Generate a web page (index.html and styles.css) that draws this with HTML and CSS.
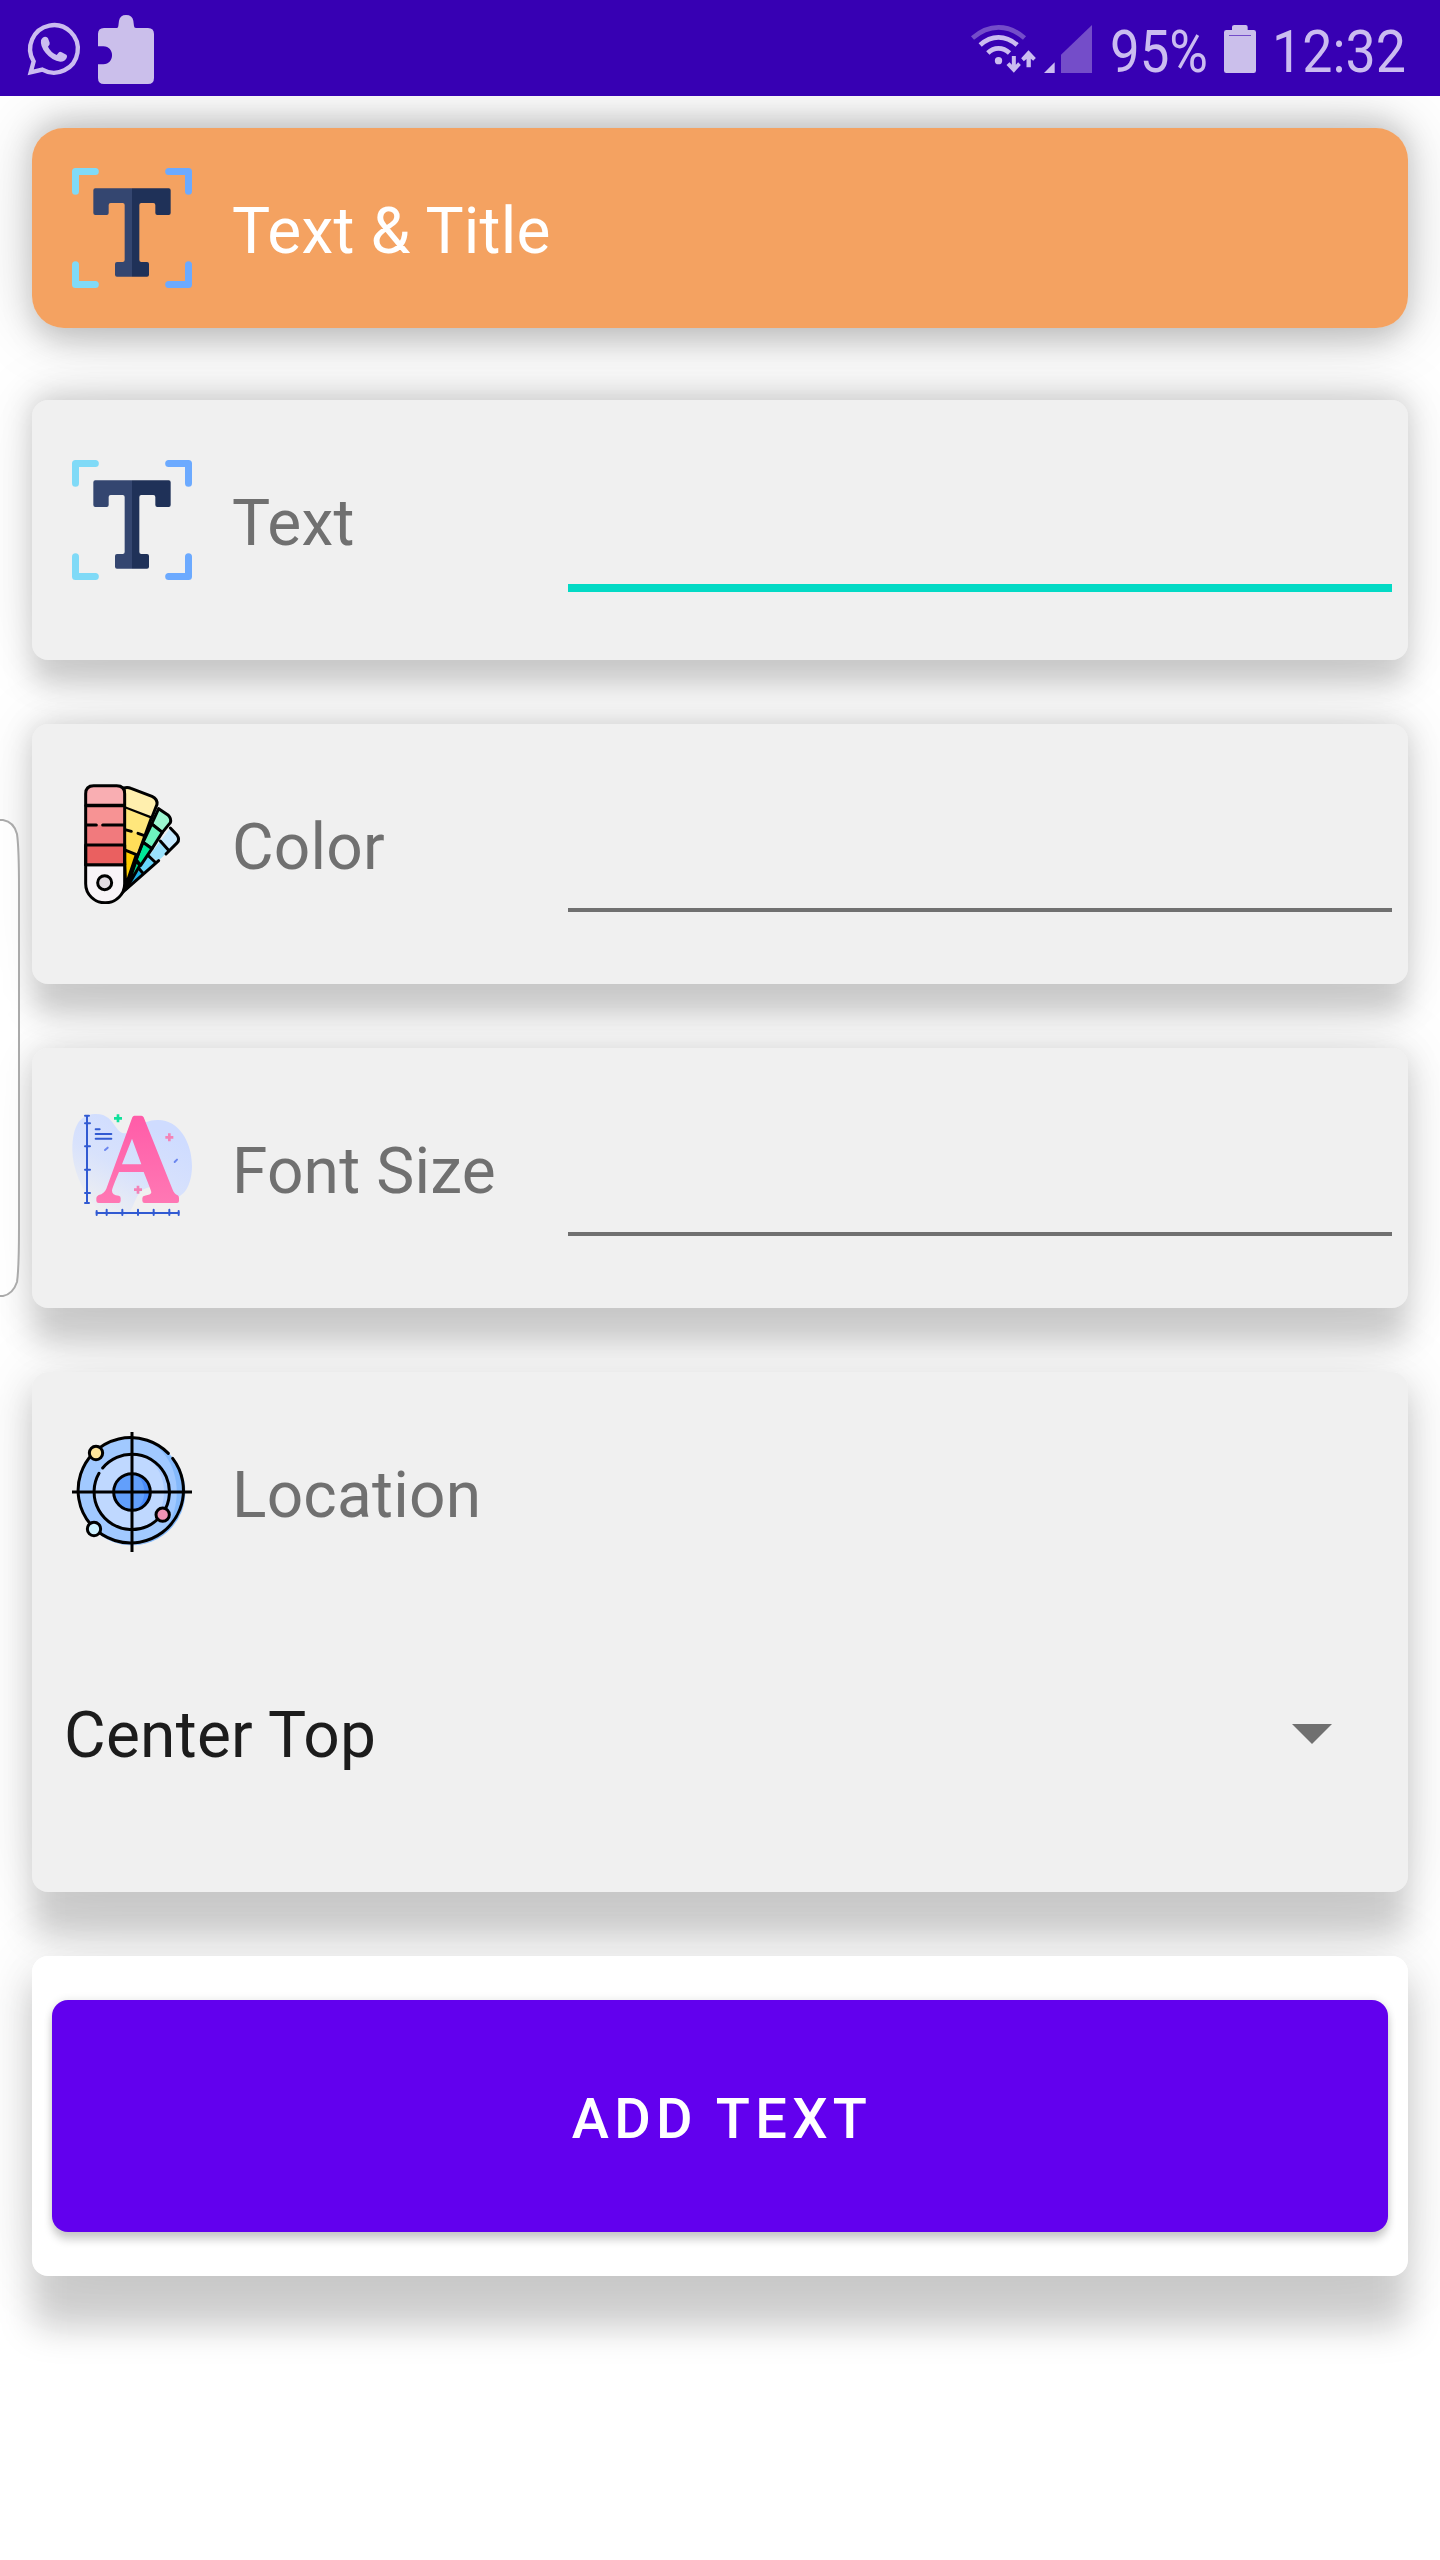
FILE: index.html
```html
<!DOCTYPE html>
<html lang="en">
<head>
<meta charset="utf-8">
<title>Text &amp; Title</title>
<link rel="stylesheet" href="styles.css">
</head>
<body>
<svg class="defs" width="0" height="0" aria-hidden="true">
  <symbol id="icon-text" viewBox="66 60 360 360">
    <g fill="none" stroke-width="21" stroke-linecap="round" stroke-linejoin="round">
      <path stroke="#80daf7" d="M76.500 130V70.500H136M76.500 350V409.500H136"/>
      <path stroke="#6caaff" d="M356 70.500H415.500V130M356 409.500H415.500V350"/>
    </g>
    <path fill="#344670" d="M136 121H246V386H201Q195 386 195 380V348Q195 342 201 342H218Q224 342 224 336V171Q224 165 218 165H182Q176 165 176 171V195Q176 201 170 201H136Q130 201 130 195V127Q130 121 136 121Z"/>
    <path fill="#1f3158" d="M246 121H356Q362 121 362 127V195Q362 201 356 201H322Q316 201 316 195V171Q316 165 310 165H274Q268 165 268 171V336Q268 342 274 342H291Q297 342 297 348V380Q297 386 291 386H246Z"/>
  </symbol>
</svg>

<header class="status">
  <svg class="status-whatsapp" viewBox="84 69 156 156">
    <path fill="none" stroke="#cbbcf0" stroke-width="13" d="M92 217L101 184A71.500 71.500 0 1 1 127 209Z"/>
    <path fill="#cbbcf0" d="M123 121Q127 110 136 110Q142 110 144 115L149 128Q151 133 144 140Q152 157 170 165L177 157Q180 154 185 157L199 164Q203 167 200 174Q195 185 181 185Q156 182 137 159Q120 139 123 121Z"/>
  </svg>
  <svg class="status-puzzle" viewBox="294 45 168 207">
    <path fill="#cbbfeb" d="M312 84H350Q355 84 355 78L357 62Q360 45 378 45Q397 45 400 62L402 78Q402 84 408 84H444Q462 84 462 102V234Q462 252 444 252H312Q294 252 294 234V193H310C345 193 345 139 310 139H294V102Q294 84 312 84Z"/>
  </svg>
  <span class="status-gap"></span>
  <svg class="status-wifi" viewBox="64 75 194 144">
    <g fill="none" stroke="#cbbcf0" stroke-width="14">
      <path stroke="#744dc9" d="M68 114Q105 82 146 82T224 114"/>
      <path d="M91 135Q116 112 146 112T202 135M114 159Q128 145 146 145T179 159"/>
    </g>
    <circle cx="146" cy="182" r="11" fill="#cbbcf0"/>
    <path fill="#cbbcf0" d="M186 168H198V194L205 187L213 195L192 218L170 195L179 187L186 194ZM230 202V177L222 184L214 175L236 151L258 174L250 182L243 176V202Z"/>
  </svg>
  <svg class="status-signal" viewBox="282 75 144 144">
    <path fill="#cbbcf0" d="M282 219L314 187V219Z"/>
    <path fill="#744dc9" d="M333 219V164L426 75V219Z"/>
  </svg>
  <svg class="status-percent" viewBox="0 0 98 96"><text x="0" y="72" textLength="98" lengthAdjust="spacingAndGlyphs">95%</text></svg>
  <svg class="status-battery" viewBox="822 75 96 144">
    <path fill="#cbbfeb" d="M853 75H887Q893 75 893 81V90H911Q918 90 918 97V212Q918 219 911 219H829Q822 219 822 212V97Q822 90 829 90H846V81Q846 75 853 75Z"/>
    <path fill="#744dc9" d="M837 105H903V108H837Z"/>
  </svg>
  <svg class="status-clock" viewBox="0 0 134 96"><text x="0" y="72" textLength="134" lengthAdjust="spacingAndGlyphs">12:32</text></svg>
</header>

<main class="form">
  <section class="card card-title">
    <svg class="icon"><use href="#icon-text"/></svg>
    <h1 class="label">Text &amp; Title</h1>
  </section>

  <section class="card card-field card-text">
    <svg class="icon"><use href="#icon-text"/></svg>
    <span class="label">Text</span>
    <span class="input input-focused"></span>
  </section>

  <section class="card card-field card-color">
    <svg class="icon" viewBox="36 72 360 360">
      <g stroke="#000" stroke-width="9" stroke-linejoin="round" stroke-linecap="round">
        <path fill="#c7ebff" stroke="none" d="M331 204L353 228Q358 238 352 247L326 273L301 243Z"/>
        <path fill="#9ae2fc" stroke="none" d="M301 243L326 273L294 304L268 286Z"/>
        <path fill="#66d5fb" stroke="none" d="M268 286L291 306L238 352L230 328Z"/>
        <path fill="#20aee5" stroke="none" d="M235 333L250 344L197 394L205 365Z"/>
        <path fill="none" d="M331 204L351 225Q360 238 352 248L318 282M296 302L180 404M301 243L325 270M266 288L285 306M238 327L250 341"/>
        <path fill="#9df6d1" d="M296 146L325 166Q335 176 331 188L307 217L275 192Z"/>
        <path fill="#6ef3be" d="M275 192L307 217L276 266L249 247Z"/>
        <path fill="#00e797" d="M249 247L276 266L242 316L228 298Z"/>
        <path fill="#00d084" d="M228 303L240 316L200 384Z"/>
        <path fill="#ffefae" d="M192 84Q202 80 213 85L276 109Q293 117 291 133L275 174L192 142Z"/>
        <path fill="#ffe77c" stroke="none" d="M192 144L274 176L252 228L192 206Z"/>
        <path fill="#ffde59" stroke="none" d="M192 205L252 227L229 285L192 269Z"/>
        <path fill="#ffcd00" d="M192 269L229 284L197 379Z"/>
        <path fill="none" d="M274 174L203 370M192 208L214 214M234 220L251 226"/>
        <path fill="#f8f4f7" d="M77 314H194V371A58 57 0 0 1 77 371Z"/>
        <path fill="#f9aeb2" d="M77 136V101Q77 77 101 77H170Q194 77 194 101V136Z"/>
        <path fill="#f79394" stroke="none" d="M77 137H194V195H77Z"/>
        <path fill="#f17a7d" stroke="none" d="M77 195H194V255H77Z"/>
        <path fill="#ea6060" d="M77 255H194V314H77Z"/>
        <path fill="none" d="M77 137V314M194 137V314M77 137H194M77 195H109M128 195H194"/>
        <circle cx="134" cy="368" r="21" fill="#e2dce2"/>
      </g>
    </svg>
    <span class="label">Color</span>
    <span class="input"></span>
  </section>

  <section class="card card-field card-size">
    <svg class="icon" viewBox="36 54 360 360">
      <linearGradient id="blob" x1=".8" y1=".2" x2=".3" y2="1"><stop offset="0" stop-color="#cfdcff"/><stop offset=".5" stop-color="#d8e2fc"/><stop offset="1" stop-color="#f0f0f0"/></linearGradient>
      <linearGradient id="letter" x1="0" y1="0" x2="0" y2="1"><stop offset="0" stop-color="#ff5ca8"/><stop offset="1" stop-color="#ff78b4"/></linearGradient>
      <path fill="url(#blob)" d="M103 72C140 70 153 90 168 112Q180 131 195 130C225 135 238 90 292 90C355 88 396 155 396 228C396 280 375 320 345 322C315 315 290 285 262 293C230 302 226 338 210 365C190 400 140 395 105 350C65 300 37 235 37 180C38 105 60 76 103 72Z"/>
      <path fill="url(#letter)" fill-rule="evenodd" d="M223 77H244Q249 77 251 82L338 299Q343 312 353 316Q357 318 357 324V333Q357 339 351 339H254Q247 339 247 332V325Q247 318 254 317Q273 315 274 307Q274 303 251 246H177Q156 295 156 302Q156 315 176 317Q182 318 182 325V332Q182 339 176 339H116Q109 339 109 332V324Q109 319 116 315Q133 311 139 296L217 82Q219 77 223 77ZM216 146L186 223H244Z"/>
      <g fill="none" stroke="#315ad2" stroke-width="6" stroke-linecap="round">
        <path d="M81 77V339M75 77H87M75 100H90M75 169H90M75 239H90M75 309H90M75 339H87M109 369H357M110 363V375M140 359V375M187 359V375M234 359V375M281 359V375M328 359V375M356 363V375M107 118H119M107 132H154M107 146H154"/>
        <path stroke="#6c87ef" d="M135 180L143 173M344 216L351 209"/>
      </g>
      <path fill="#10e19b" d="M170 73H178V81H186V89H178V97H170V89H162V81H170Z"/>
      <path fill="#f383b7" d="M324 130H332V138H340V146H332V154H324V146H316V138H324ZM230 287H238V295H246V303H238V311H230V303H222V295H230Z"/>
    </svg>
    <span class="label">Font Size</span>
    <span class="input"></span>
  </section>

  <section class="card card-location">
    <div class="location-head">
      <svg class="icon" viewBox="36 36 360 360">
        <circle cx="216" cy="216" r="160" fill="#84b9fb"/>
        <path fill="#a1c9ff" d="M216 56C395 60 395 372 216 376A160 160 0 0 1 216 56Z"/>
        <circle cx="216" cy="216" r="113" fill="#a9cbff"/>
        <path fill="#bfd8ff" d="M216 103C344 110 344 322 216 329A113 113 0 0 1 216 103Z"/>
        <circle cx="216" cy="216" r="55" fill="#498bfa"/>
        <path fill="#629ffb" d="M216 161C265 170 265 262 216 271A55 55 0 0 1 216 161Z"/>
        <g fill="none" stroke="#000" stroke-width="9" stroke-linecap="round">
          <path d="M325 100A158 158 0 1 0 338 115"/>
          <path d="M117 160A113 113 0 1 0 128 144"/>
          <circle cx="216" cy="216" r="55"/>
          <path stroke-linecap="butt" d="M216 36V396M36 216H396"/>
          <circle cx="108" cy="99" r="20" fill="#ffe69d"/>
          <circle cx="102" cy="327" r="20" fill="#cdf1ff"/>
          <circle cx="308" cy="284" r="20" fill="#f193b4"/>
        </g>
      </svg>
      <span class="label">Location</span>
    </div>
    <div class="select">
      <span class="select-value">Center Top</span>
      <svg class="select-arrow" viewBox="0 0 40 20"><path fill="#707070" d="M0 0H40L20 20Z"/></svg>
    </div>
  </section>

  <section class="card card-action">
    <button class="button" type="button">ADD TEXT</button>
  </section>
</main>

<svg class="edge-handle" viewBox="0 0 21 480">
  <path d="M-4 2H3Q14 4 17 16Q19 30 19 70V410Q19 450 17 464Q13 476 3 478H-4Z"/>
</svg>
</body>
</html>
```
FILE: styles.css
```css
* {
  box-sizing: border-box;
}

body {
  margin: 0;
  width: 1440px;
  height: 2560px;
  position: relative;
  overflow: hidden;
  background: #fff;
  font-family: Roboto, "Noto Sans", sans-serif;
}

.defs {
  display: none;
}

.status {
  position: relative;
  z-index: 1;
  display: flex;
  align-items: center;
  height: 96px;
  padding: 2px 34px 0 28px;
  background: #3700b3;
}

.status svg {
  flex: none;
  overflow: visible;
}

.status text {
  font-size: 60px;
  fill: #cbbcf0;
}

.status-gap {
  flex: 1;
}

.status-whatsapp {
  width: 52px;
  height: 52px;
}

.status-puzzle {
  width: 56px;
  height: 69px;
  margin-left: 18px;
}

.status-wifi {
  width: 65px;
  height: 48px;
  margin-right: 8px;
}

.status-signal {
  width: 48px;
  height: 48px;
  margin-right: 18px;
}

.status-percent {
  width: 98px;
  height: 96px;
  margin: -2px 16px 0 0;
}

.status-battery {
  width: 32px;
  height: 48px;
  margin-right: 16px;
}

.status-clock {
  width: 134px;
  height: 96px;
  margin-top: -2px;
}

.form {
  display: flex;
  flex-direction: column;
  isolation: isolate;
  gap: 64px;
  padding: 32px;
}

.card {
  --drop: 10px;
  --grow: 14px;
  --soft: 14px;
  position: relative;
  border-radius: 16px;
  background: #f0f0f0;
}

/* Elevation: ::before is the key light's shadow, ::after the ambient one.
   Both sit under every card, so no card is dimmed by its neighbour. */
.card::before,
.card::after {
  content: "";
  position: absolute;
  z-index: -1;
  border-radius: inherit;
}

.card::before {
  inset: calc(var(--drop) - var(--grow)) 0 calc(0px - var(--drop) - var(--grow));
  background: rgba(0, 0, 0, .175);
  filter: blur(var(--soft));
}

.card::after {
  inset: 0;
  box-shadow: 0 0 76px rgba(0, 0, 0, .09);
}

.card-title {
  --drop: 3px;
  --grow: 10px;
  display: flex;
  align-items: center;
  height: 200px;
  margin-bottom: 8px;
  padding: 0 40px;
  border-radius: 32px;
  background: #f4a261;
}

.card-title::after {
  box-shadow: 0 0 72px rgba(0, 0, 0, .16);
}

.card-title .label {
  padding-top: 7px;
  color: #fff;
}

.card-field {
  display: flex;
  align-items: flex-start;
  height: 260px;
  padding: 60px 16px 0 40px;
}

.card-color {
  --drop: 16px;
}

.card-size {
  --drop: 21px;
  --soft: 15px;
}

.card-location {
  --drop: 30px;
  --soft: 16px;
  height: 520px;
  padding: 60px 76px 0 32px;
}

.card-action {
  --drop: 39px;
  --soft: 17px;
  height: 320px;
  padding: 44px 20px;
  background: #fff;
}

.icon {
  flex: none;
  width: 120px;
  height: 120px;
}

.label {
  width: 336px;
  margin: 0 0 0 40px;
  padding-top: 2px;
  font-size: 64px;
  font-weight: 400;
  line-height: 124px;
  letter-spacing: .2px;
  white-space: nowrap;
  color: #707070;
}

.input {
  flex: 1;
  height: 128px;
  border-bottom: 4px solid #707070;
}

.input-focused {
  height: 132px;
  border-bottom: 8px solid #03dac5;
}

.location-head {
  display: flex;
  height: 120px;
  padding-left: 8px;
}

.select {
  display: flex;
  align-items: center;
  justify-content: space-between;
  height: 120px;
  margin-top: 122px;
}

.select-value {
  padding-top: 4px;
  font-size: 64px;
  line-height: 120px;
  letter-spacing: .25px;
  color: #1c1c1c;
}

.select-arrow {
  width: 40px;
  height: 20px;
}

.button {
  display: block;
  width: 100%;
  height: 232px;
  padding: 6px 0 0 4px;
  border: 0;
  border-radius: 16px;
  background: #6200ee;
  box-shadow:
    0 0 8px rgba(0, 0, 0, .1),
    0 8px 8px rgba(0, 0, 0, .18);
  font-family: inherit;
  font-size: 56px;
  font-weight: 500;
  letter-spacing: 5.3px;
  color: #fff;
}

.edge-handle {
  position: absolute;
  left: 0;
  top: 818px;
  width: 21px;
  height: 480px;
  fill: rgba(255, 255, 255, .7);
  stroke: #aaa;
  stroke-width: 2;
}
```
